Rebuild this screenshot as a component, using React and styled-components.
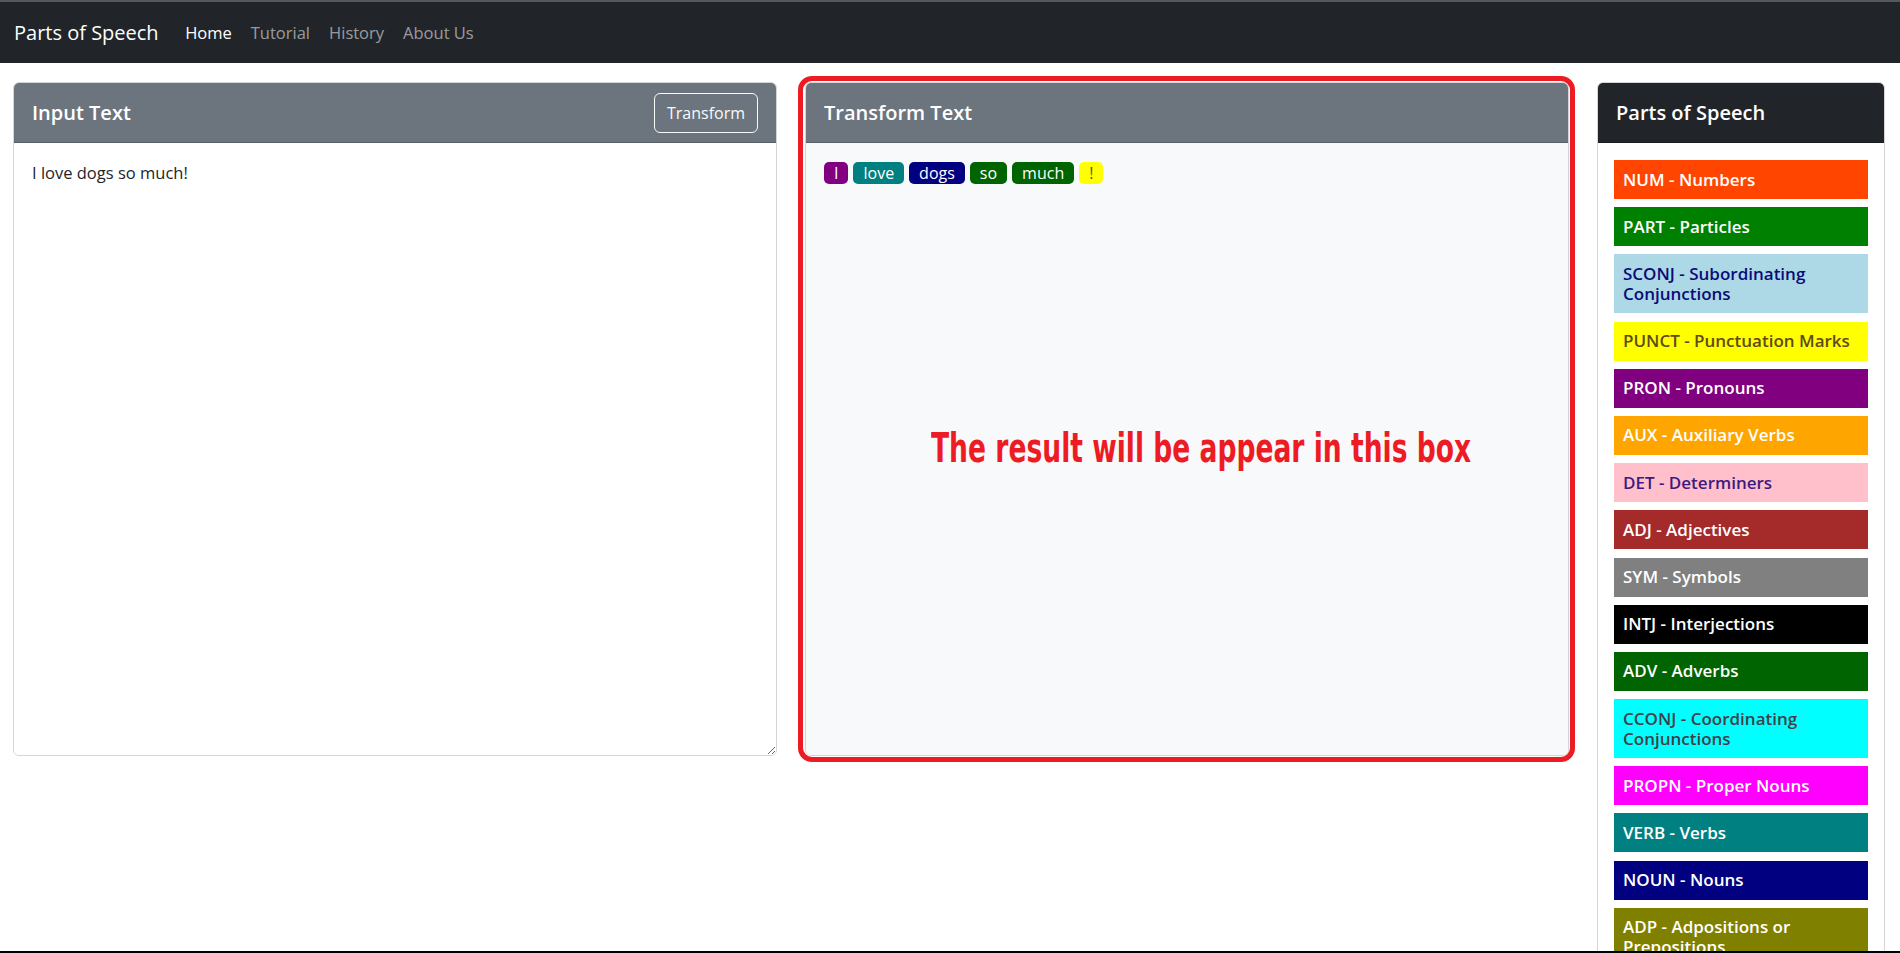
import React from "react";
import styled, { createGlobalStyle } from "styled-components";

const tags = [
  { word: "I", bg: "#800080", fg: "#fff" },
  { word: "love", bg: "#008080", fg: "#fff" },
  { word: "dogs", bg: "#000080", fg: "#fff" },
  { word: "so", bg: "#006400", fg: "#fff" },
  { word: "much", bg: "#006400", fg: "#fff" },
  { word: "!", bg: "#ffff00", fg: "#6b5418" },
];

const legend = [
  { label: "NUM - Numbers", bg: "#ff4500", fg: "#fff" },
  { label: "PART - Particles", bg: "#008000", fg: "#fff" },
  { label: "SCONJ - Subordinating Conjunctions", bg: "#add8e6", fg: "#0b0b78" },
  { label: "PUNCT - Punctuation Marks", bg: "#ffff00", fg: "#5e4a1c" },
  { label: "PRON - Pronouns", bg: "#800080", fg: "#fff" },
  { label: "AUX - Auxiliary Verbs", bg: "#ffa500", fg: "#fff" },
  { label: "DET - Determiners", bg: "#ffc0cb", fg: "#3d1a80" },
  { label: "ADJ - Adjectives", bg: "#a52a2a", fg: "#fff" },
  { label: "SYM - Symbols", bg: "#808080", fg: "#fff" },
  { label: "INTJ - Interjections", bg: "#000000", fg: "#fff" },
  { label: "ADV - Adverbs", bg: "#006400", fg: "#fff" },
  { label: "CCONJ - Coordinating Conjunctions", bg: "#00ffff", fg: "#404048" },
  { label: "PROPN - Proper Nouns", bg: "#ff00ff", fg: "#fff" },
  { label: "VERB - Verbs", bg: "#008080", fg: "#fff" },
  { label: "NOUN - Nouns", bg: "#000080", fg: "#fff" },
  { label: "ADP - Adpositions or Prepositions", bg: "#808000", fg: "#fff" },
];

const GlobalStyle = createGlobalStyle`
  html, body {
    margin: 0;
    padding: 0;
    height: 100%;
    overflow: hidden;
    background: #fff;
  }
  body {
    font-family: "Open Sans", "Noto Sans", "Liberation Sans", sans-serif;
    font-size: 16px;
    color: #212529;
  }
  body::after {
    content: "";
    position: fixed;
    left: 0;
    right: 0;
    bottom: 0;
    height: 2px;
    background: #000;
  }
  * { box-sizing: border-box; }
`;

const App = () => {
  return (
    <>
      <GlobalStyle />
      <Navbar>
        <Brand>Parts of Speech</Brand>
        <NavLink $active>Home</NavLink>
        <NavLink>Tutorial</NavLink>
        <NavLink>History</NavLink>
        <NavLink>About Us</NavLink>
      </Navbar>
      <Main>
        <Card>
          <CardHeader>
            <span>Input Text</span>
            <OutlineButton>Transform</OutlineButton>
          </CardHeader>
          <InputArea defaultValue="I love dogs so much!" />
        </Card>

        <Highlighted>
          <Card>
            <CardHeader>
              <span>Transform Text</span>
            </CardHeader>
            <ResultBody>
              <TagRow>
                {tags.map((t, i) => (
                  <Tag key={i} $bg={t.bg} $fg={t.fg}>
                    {t.word}
                  </Tag>
                ))}
              </TagRow>
              <Note>The result will be appear in this box</Note>
            </ResultBody>
          </Card>
        </Highlighted>

        <Card $open>
          <CardHeader $dark>
            <span>Parts of Speech</span>
          </CardHeader>
          <LegendList>
            {legend.map((l) => (
              <LegendItem key={l.label} $bg={l.bg} $fg={l.fg}>
                {l.label}
              </LegendItem>
            ))}
          </LegendList>
        </Card>
      </Main>
    </>
  );
};

export default App;

const Navbar = styled.nav`
  height: 63px;
  border-top: 2px solid #55595d;
  background: #212529;
  display: flex;
  align-items: center;
  padding: 0 14px;
`;

const Brand = styled.a`
  font-size: 20px;
  color: #fff;
  margin-right: 17px;
  cursor: pointer;
`;

const NavLink = styled.a`
  padding: 0 9.5px;
  font-size: 16.5px;
  color: ${(p) => (p.$active ? "#fff" : "rgba(255, 255, 255, 0.55)")};
  cursor: pointer;
`;

const Main = styled.main`
  display: grid;
  grid-template-columns: 764px 764px 288px;
  column-gap: 28px;
  align-items: start;
  padding: 19px 15px 0 13px;
`;

const Card = styled.section`
  display: flex;
  flex-direction: column;
  height: ${(p) => (p.$open ? "auto" : "674px")};
  border: 1px solid #d3d5d8;
  border-radius: 6px;
  overflow: hidden;
  background: #fff;
`;

const CardHeader = styled.header`
  flex-shrink: 0;
  height: 60px;
  display: flex;
  align-items: center;
  justify-content: space-between;
  padding: 0 18px;
  background: ${(p) => (p.$dark ? "#212529" : "#6c757d")};
  border-bottom: 1px solid rgba(0, 0, 0, 0.175);
  color: #fff;
  font-size: 20px;
  font-weight: 600;
`;

const OutlineButton = styled.button`
  height: 40px;
  padding: 0 12px;
  border: 1px solid #f8f9fa;
  border-radius: 6px;
  background: transparent;
  color: #f8f9fa;
  font-family: inherit;
  font-size: 16px;
  font-weight: 400;
  cursor: pointer;
`;

const InputArea = styled.textarea`
  flex: 1;
  border: none;
  outline: none;
  padding: 18px 18px 16px;
  font-family: inherit;
  font-size: 16.5px;
  line-height: 1.5;
  color: #212529;
  background: #fff;
`;

const Highlighted = styled.div`
  position: relative;

  &::before {
    content: "";
    position: absolute;
    top: -6px;
    bottom: -6px;
    left: -7px;
    right: -6px;
    border: 5px solid #ed1c24;
    border-radius: 14px;
    pointer-events: none;
  }
`;

const ResultBody = styled.div`
  position: relative;
  flex: 1;
  background: #f8f9fa;
  padding: 19px 18px 18px;
`;

const TagRow = styled.div`
  display: flex;
  flex-wrap: wrap;
  gap: 5px;
`;

const Tag = styled.span`
  display: inline-block;
  height: 22px;
  line-height: 22px;
  padding: 0 10px;
  border-radius: 5px;
  font-size: 16px;
  background: ${(p) => p.$bg};
  color: ${(p) => p.$fg};
`;

const Note = styled.div`
  position: absolute;
  left: 125px;
  top: 285px;
  white-space: nowrap;
  font-family: "DejaVu Sans Condensed", "DejaVu Sans", sans-serif;
  font-stretch: condensed;
  font-weight: 700;
  font-size: 41px;
  line-height: 1;
  color: #ed1c24;
  transform: scaleX(0.72);
  transform-origin: left center;
`;

const LegendList = styled.div`
  display: flex;
  flex-direction: column;
  gap: 8.2px;
  padding: 17px 16px;
`;

const LegendItem = styled.div`
  padding: 9.5px 8px 9.5px 9px;
  font-size: 17px;
  font-weight: 600;
  line-height: 20px;
  background: ${(p) => p.$bg};
  color: ${(p) => p.$fg};
`;
